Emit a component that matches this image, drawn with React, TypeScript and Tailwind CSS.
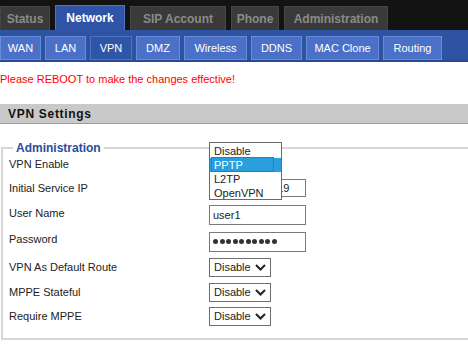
import React from 'react';

const mainTabs = [
  { name: 'Status', w: 'w-[50px]' },
  { name: 'Network', w: 'w-[70px]', active: true },
  { name: 'SIP Account', w: 'w-[96px]' },
  { name: 'Phone', w: 'w-[48px]' },
  { name: 'Administration', w: 'w-[104px]' },
];

const subTabs = [
  { name: 'WAN', w: 'w-[41px]' },
  { name: 'LAN', w: 'w-[41px]' },
  { name: 'VPN', w: 'w-[42px]', active: true },
  { name: 'DMZ', w: 'w-[44px]' },
  { name: 'Wireless', w: 'w-[63px]' },
  { name: 'DDNS', w: 'w-[51px]' },
  { name: 'MAC Clone', w: 'w-[73px]' },
  { name: 'Routing', w: 'w-[59px]' },
];

const SelectBox: React.FC<{ value: string }> = ({ value }) => (
  <div className="w-[62px] h-[19px] border border-[#6e6e6e] bg-white flex items-center justify-between pl-[4px] pr-[3px] text-[11px] text-[#222]">
    <span>{value}</span>
    <svg width="11" height="7" viewBox="0 0 11 7" className="mr-[1px]">
      <path d="M1 1 L5.5 5.5 L10 1" fill="none" stroke="#222" strokeWidth="2" />
    </svg>
  </div>
);

const TextBox: React.FC<{ value?: string; h: string; children?: React.ReactNode }> = ({ value, h, children }) => (
  <div className={`w-[97px] ${h} border border-[#7a7a7a] bg-white flex items-center pl-[3px] text-[11px] text-[#222]`}>
    {value}
    {children}
  </div>
);

const rows = [
  { label: 'VPN Enable', h: 'h-[18px]', control: <SelectBox value="PPTP" /> },
  { label: 'Initial Service IP', h: 'h-[30px]', control: <TextBox value="192.168.100.19" h="h-[18px]" /> },
  { label: 'User Name', h: 'h-[24px]', lift: true, control: <TextBox value="user1" h="h-[20px]" /> },
  {
    label: 'Password',
    h: 'h-[29px]',
    lift: true,
    control: (
      <TextBox h="h-[20px]">
        <div className="flex gap-[1.5px]">
          {Array.from({ length: 10 }).map((_, i) => (
            <span key={i} className="w-[5px] h-[5px] rounded-full bg-[#333]" />
          ))}
        </div>
      </TextBox>
    ),
  },
  { label: 'VPN As Default Route', h: 'h-[22px]', control: <SelectBox value="Disable" /> },
  { label: 'MPPE Stateful', h: 'h-[28px]', control: <SelectBox value="Disable" /> },
  { label: 'Require MPPE', h: 'h-[20px]', control: <SelectBox value="Disable" /> },
];

const App: React.FC = () => {
  return (
    <div className="relative w-[468px] h-[345px] overflow-hidden bg-white font-['Liberation_Sans',Arial,sans-serif]">
      {/* main tabs */}
      <div className="flex items-end gap-[5px] h-[30px] bg-[#131313]">
        {mainTabs.map((t) => (
          <div
            key={t.name}
            className={`${t.w} flex items-center justify-center text-[12px] font-bold ${
              t.active
                ? 'h-[25px] bg-[#2f54a6] border border-b-0 border-[#4d72c6] text-white'
                : 'h-[24px] bg-[#3a3a3a] border border-b-0 border-[#464646] text-[#8a8a8a]'
            }`}
          >
            {t.name}
          </div>
        ))}
      </div>

      {/* sub tabs */}
      <div className="flex items-start gap-[4px] h-[32px] pt-[6px] bg-[#2e53a3] border-b-2 border-[#284a94]">
        {subTabs.map((t) => (
          <div
            key={t.name}
            className={`${t.w} h-[24px] flex items-center justify-center text-[11px] text-white border ${
              t.active ? 'bg-[#2f55a6] border-[#4f73c2]' : 'bg-[#4a71c7] border-[#6a8cd8]'
            }`}
          >
            {t.name}
          </div>
        ))}
      </div>

      <div className="h-[42px] pt-[10px] text-[11px] leading-[14px] text-[#ff0000]">
        Please REBOOT to make the changes effective!
      </div>

      <div className="h-[20px] bg-[#c9c9c9] border-b border-[#9c9c9c] flex items-center pl-[8px] text-[12px] font-bold tracking-[0.7px] text-[#111]">
        VPN Settings
      </div>

      <fieldset className="mt-[17px] ml-[1px] w-[480px] border-2 border-[#d6d6d6] pl-[6px] pb-[12px]">
        <legend className="ml-[4px] px-[3px] text-[12px] leading-[14px] font-bold text-[#2b4c9c]">Administration</legend>
        {rows.map((r) => (
          <div key={r.label} className={`flex items-center ${r.h}`}>
            <div className={`w-[200px] text-[11px] text-[#222] ${r.lift ? 'pb-[4px]' : ''}`}>{r.label}</div>
            {r.control}
          </div>
        ))}
      </fieldset>

      {/* open dropdown list of VPN Enable */}
      <div className="absolute left-[209px] top-[142px] w-[73px] h-[58px] border border-[#6a6a6a] bg-white text-[11px] text-[#222] pt-[1px]">
        <div className="h-[14px] leading-[14px] pl-[4px]">Disable</div>
        <div className="relative h-[14px] leading-[14px] pl-[4px] bg-[#2a9fdd] text-white">
          PPTP
          <div className="absolute left-[1px] top-[-1px] w-[63px] h-[15px] border border-[#e53935]" />
        </div>
        <div className="h-[14px] leading-[14px] pl-[4px]">L2TP</div>
        <div className="h-[14px] leading-[14px] pl-[4px]">OpenVPN</div>
      </div>
    </div>
  );
};

export default App;
